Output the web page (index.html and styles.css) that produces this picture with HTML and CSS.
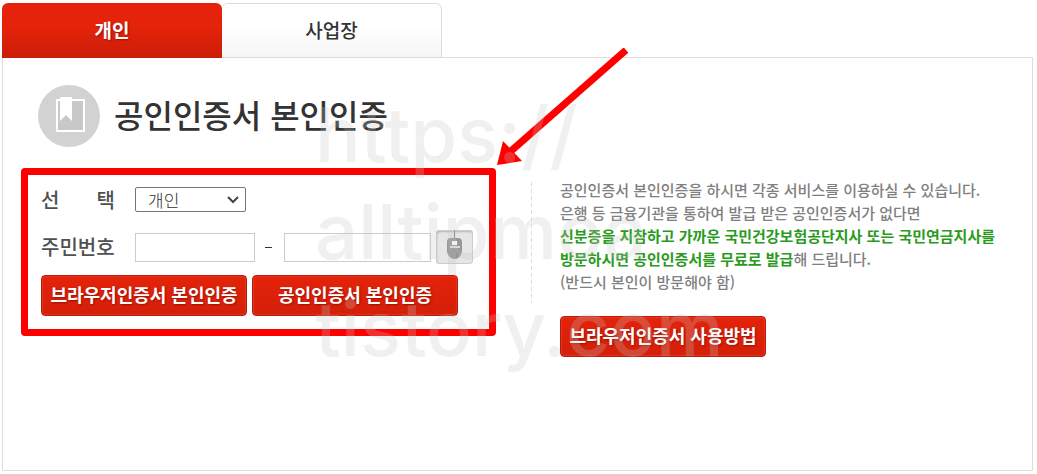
FILE: index.html
```html
<!DOCTYPE html>
<html lang="ko">
<head>
    <meta charset="UTF-8">
    <meta name="viewport" content="width=device-width, initial-scale=1.0">
    <title>공인인증서 본인인증</title>
    <link rel="stylesheet" href="styles.css">
</head>
<body>
    <div class="wrap">
        <div class="tabs">
            <button type="button" class="tab active">개인</button>
            <button type="button" class="tab">사업장</button>
        </div>
        <div class="panel">
            <div class="title">
                <svg class="title-icon" viewBox="0 0 62 62">
                    <circle cx="31" cy="31" r="31" fill="#d2d2d2"/>
                    <rect x="19" y="15" width="27" height="31" fill="#c8c8c8" stroke="#fff" stroke-width="2"/>
                    <path d="M22 12h12v24l-6-6-6 6z" fill="#fff"/>
                </svg>
                <h1>공인인증서 본인인증</h1>
            </div>
            <div class="content">
                <form class="login">
                    <div class="row row-select">
                        <label class="label spread" for="type"><span>선</span><span>택</span></label>
                        <div class="select-box">
                            <select id="type">
                                <option>개인</option>
                                <option>사업장</option>
                            </select>
                            <svg class="chevron" viewBox="0 0 12 8"><path d="M1 1l5 5 5-5" fill="none" stroke="#444" stroke-width="2"/></svg>
                        </div>
                    </div>
                    <div class="row row-number">
                        <label class="label" for="num1">주민번호</label>
                        <input type="text" id="num1" class="num1" maxlength="6">
                        <span class="dash"></span>
                        <input type="password" class="num2" maxlength="7" aria-label="주민번호 뒷자리">
                        <button type="button" class="mouse" aria-label="마우스 입력">
                            <svg viewBox="0 0 37 34">
                                <path d="M18.5 0v9" stroke="#888" stroke-width="1"/>
                                <path d="M15 8h7q4 0 4 4v8c0 5-3 9-7.5 9S11 25 11 20v-8q0-4 4-4z" fill="#969696"/>
                                <rect x="16" y="11" width="5" height="4" fill="#fff"/>
                                <path d="M14 17h10" stroke="#ddd" stroke-width="2"/>
                            </svg>
                        </button>
                    </div>
                    <div class="buttons">
                        <button type="button" class="btn">브라우저인증서 본인인증</button>
                        <button type="button" class="btn">공인인증서 본인인증</button>
                    </div>
                </form>
                <div class="info">
                    <p>
                        공인인증서 본인인증을 하시면 각종 서비스를 이용하실 수 있습니다.<br>
                        은행 등 금융기관을 통하여 발급 받은 공인인증서가 없다면<br>
                        <strong>신분증을 지참하고 가까운 국민건강보험공단지사 또는 국민연금지사를<br>
                        방문하시면 공인인증서를 무료로 발급</strong>해 드립니다.<br>
                        (반드시 본인이 방문해야 함)
                    </p>
                    <button type="button" class="btn">브라우저인증서 사용방법</button>
                </div>
            </div>
        </div>
        <svg class="arrow" viewBox="0 0 132 120">
            <path d="M129 2L14 103" stroke="#f00" stroke-width="7"/>
            <path d="M0 117L6 93l19 20z" fill="#f00"/>
        </svg>
        <div class="watermark">https://<br>alltipmoa<br>tistory.com</div>
    </div>
</body>
</html>
```
FILE: styles.css
```css
*{
    margin: 0;
    padding: 0;
    box-sizing: border-box;
}
body{
    background-color: #fff;
    font-family: "Noto Sans CJK KR", sans-serif;
    color: #333;
}
button{
    font-family: inherit;
    cursor: pointer;
}
.wrap{
    position: relative;
    display: flex;
    flex-direction: column;
    min-height: 100vh;
    padding: 3px 4px 3px 2px;
}
.tabs{
    display: flex;
    margin-bottom: -1px;
}
.tab{
    width: 220px;
    height: 55px;
    padding-bottom: 2px;
    border: 1px solid #ddd;
    border-left: 0;
    border-radius: 6px 6px 0 0;
    background: linear-gradient(#fff 40%, #f6f6f6);
    color: #333;
    font-size: 19px;
    font-weight: 500;
}
.tab.active{
    border: 0;
    background: linear-gradient(#e4230a 45%, #cb1d09);
    color: #fff;
    font-weight: 700;
    text-shadow: 1px 1px 2px rgba(90, 0, 0, .5);
    z-index: 1;
}
.panel{
    flex: 1;
    padding: 27px 18px;
    border: 1px solid #ddd;
}
.title{
    display: flex;
    align-items: center;
    gap: 14px;
    margin-left: 17px;
}
.title-icon{
    width: 62px;
    height: 62px;
}
h1{
    padding-bottom: 4px;
    font-size: 32px;
    font-weight: 500;
    line-height: 40px;
}
.content{
    display: grid;
    grid-template-columns: minmax(0, 475px) minmax(0, 1fr);
    align-items: start;
    gap: 35px;
    margin-top: 21px;
}
.login{
    padding: 12px 13px 13px;
    border: 7px solid #f00;
    border-radius: 4px;
}
.row{
    display: flex;
    align-items: center;
}
.row-select{
    height: 25px;
    margin-bottom: 18px;
}
.row-number{
    height: 34px;
    margin-bottom: 11px;
}
.label{
    width: 74px;
    margin-right: 20px;
    color: #505050;
    font-size: 20px;
    font-weight: 500;
    line-height: 24px;
}
.spread{
    display: flex;
    justify-content: space-between;
}
.select-box{
    position: relative;
}
select{
    display: block;
    width: 111px;
    height: 25px;
    padding-left: 12px;
    border: 1px solid #767676;
    border-radius: 2px;
    background-color: #fff;
    color: #333;
    font-family: inherit;
    font-size: 17px;
    font-weight: 300;
    line-height: 23px;
    appearance: none;
}
.chevron{
    position: absolute;
    top: 9px;
    right: 7px;
    width: 12px;
    height: 8px;
    pointer-events: none;
}
input{
    height: 29px;
    padding: 0 6px;
    border: 1px solid #ccc;
    font-size: 16px;
}
.num1{
    width: 120px;
}
.num2{
    width: 147px;
}
.dash{
    width: 7px;
    height: 1px;
    margin: 0 12px 0 10px;
    background-color: #333;
}
.mouse{
    width: 37px;
    height: 34px;
    margin-left: 5px;
    border: 0;
    border-radius: 4px;
    background-color: #e6e6e6;
    box-shadow: inset 0 0 0 1px #ccc, inset 1px 2px 2px #b5b5b5;
}
.mouse svg{
    display: block;
}
.buttons{
    display: flex;
    gap: 5px;
}
.btn{
    width: 206px;
    height: 41px;
    padding-bottom: 4px;
    border: 1px solid #b71c0c;
    border-radius: 4px;
    background: linear-gradient(#e4230a, #d41f09);
    box-shadow: inset 0 0 2px #f0604c;
    color: #fff;
    font-size: 18px;
    font-weight: 700;
    line-height: 24px;
    white-space: nowrap;
    text-shadow: 1px 1px 2px rgba(90, 0, 0, .5);
}
.info{
    padding: 10px 0 0 29px;
    background: repeating-linear-gradient(#ddd 0 4px, transparent 4px 7px) 0 14px / 1px 121px no-repeat;
}
.info p{
    margin-bottom: 23px;
    color: #808080;
    font-size: 15px;
    font-weight: 500;
    line-height: 23px;
    white-space: nowrap;
}
.info strong{
    color: #2a9a1c;
    font-weight: 700;
}
/* 강조 화살표 */
.arrow{
    position: absolute;
    top: 48px;
    left: 497px;
    width: 132px;
    height: 120px;
    pointer-events: none;
}
/* 워터마크 */
.watermark{
    position: absolute;
    top: 86px;
    left: 315px;
    color: rgba(195, 195, 195, .25);
    font-family: Inter, sans-serif;
    font-size: 76px;
    font-weight: 500;
    line-height: 97px;
    pointer-events: none;
}
```
